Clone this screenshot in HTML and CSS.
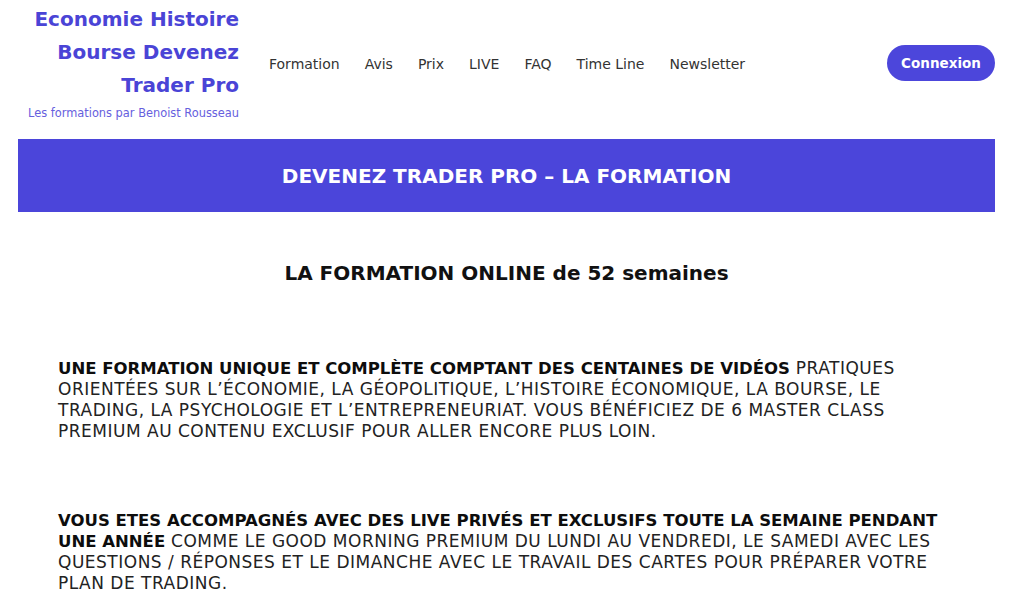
FILE: index.html
```html
<!DOCTYPE html>
<html lang="fr">
<head>
<meta charset="utf-8">
<title>Devenez Trader Pro</title>
<link rel="stylesheet" href="styles.css">
</head>
<body>
<div class="page">
  <header class="header">
    <div class="brand">
      <div class="brand-title">Economie Histoire<br>Bourse Devenez<br>Trader Pro</div>
      <div class="brand-sub">Les formations par Benoist Rousseau</div>
    </div>
    <nav class="nav">
      <a>Formation</a>
      <a>Avis</a>
      <a>Prix</a>
      <a>LIVE</a>
      <a>FAQ</a>
      <a>Time Line</a>
      <a>Newsletter</a>
    </nav>
    <a class="btn">Connexion</a>
  </header>
  <section class="banner">
    <h1>DEVENEZ TRADER PRO – LA FORMATION</h1>
  </section>
  <section class="content">
    <h2>LA FORMATION ONLINE de 52 semaines</h2>
    <p><strong>UNE FORMATION UNIQUE ET COMPLÈTE COMPTANT DES CENTAINES DE VIDÉOS</strong> PRATIQUES ORIENTÉES SUR L’ÉCONOMIE, LA GÉOPOLITIQUE, L’HISTOIRE ÉCONOMIQUE, LA BOURSE, LE TRADING, LA PSYCHOLOGIE ET L’ENTREPRENEURIAT. VOUS BÉNÉFICIEZ DE 6 MASTER CLASS PREMIUM AU CONTENU EXCLUSIF POUR ALLER ENCORE PLUS LOIN.</p>
    <p><strong>VOUS ETES ACCOMPAGNÉS AVEC DES LIVE PRIVÉS ET EXCLUSIFS TOUTE LA SEMAINE PENDANT UNE ANNÉE</strong> COMME LE GOOD MORNING PREMIUM DU LUNDI AU VENDREDI, LE SAMEDI AVEC LES QUESTIONS / RÉPONSES ET LE DIMANCHE AVEC LE TRAVAIL DES CARTES POUR PRÉPARER VOTRE PLAN DE TRADING.</p>
  </section>
</div>
</body>
</html>
```
FILE: styles.css
```css
* { box-sizing: border-box; }
html, body { margin: 0; padding: 0; background: #fff; }
body { font-family: "DejaVu Sans", "Liberation Sans", sans-serif; color: #222; }
.page { width: 1024px; padding: 0 29px 0 18px; }
.header { display: flex; align-items: center; height: 139px; }
.brand { width: 221px; text-align: right; padding-bottom: 16px; }
.brand-title { font-size: 20px; font-weight: 700; line-height: 33px; color: #4a44d6; white-space: nowrap; }
.brand-sub { font-size: 11.4px; color: #6660de; margin-top: 4px; white-space: nowrap; }
.nav { display: flex; margin-left: 30px; flex: 1; margin-bottom: 12px; }
.nav a { font-size: 14px; color: #333; margin-right: 25px; }
.btn { display: flex; align-items: center; justify-content: center; width: 108px; height: 36px; border-radius: 18px; background: #4c46db; color: #fff; font-weight: 700; font-size: 13.5px; margin-bottom: 14px; }
.banner { background: #4b45da; height: 73px; display: flex; align-items: center; justify-content: center; }
.banner h1 { margin: 0; color: #fff; font-size: 20px; font-weight: 700; }
.content { padding: 0 40px; }
.content h2 { text-align: center; font-size: 20px; font-weight: 700; color: #111; margin: 49px 0 73px; }
.content p { font-size: 17px; letter-spacing: 0.5px; line-height: 21px; color: #222; margin: 0 0 68px; }
.content strong { font-size: 16.5px; letter-spacing: 0; line-height: 21px; color: #0d0d0d; font-weight: 700; }
```
